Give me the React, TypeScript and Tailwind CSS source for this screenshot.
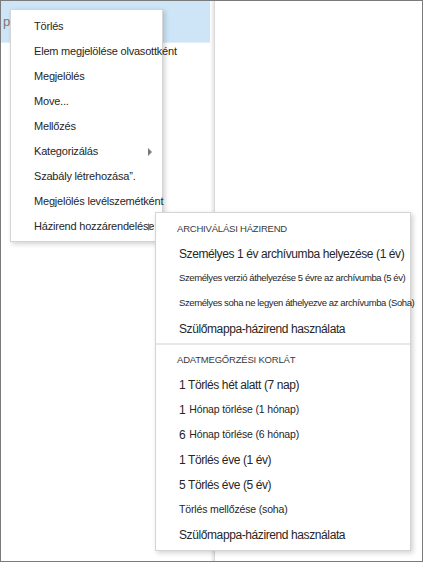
import React from "react";

type Item = { parts: { t: string; cls: string }[] };

const MAIN = [
  "Törlés",
  "Elem megjelölése olvasottként",
  "Megjelölés",
  "Move...",
  "Mellőzés",
  "Kategorizálás",
  "Szabály létrehozása\u201d.",
  "Megjelölés levélszemétként",
  "Házirend hozzárendelése:",
];

const big = "text-[12px] tracking-[-0.4px]";
const small = "text-[9.5px] tracking-[-0.4px]";
const mid = "text-[10.5px] tracking-[-0.15px]";

const ARCHIVE: Item[] = [
  { parts: [{ t: "Személyes 1 év archívumba helyezése (1 év)", cls: big }] },
  { parts: [{ t: "Személyes verzió áthelyezése 5 évre az archívumba (5 év)", cls: small }] },
  { parts: [{ t: "Személyes soha ne legyen áthelyezve az archívumba (Soha)", cls: small }] },
  { parts: [{ t: "Szülőmappa-házirend használata", cls: big }] },
];

const RETENTION: Item[] = [
  { parts: [{ t: "1 Törlés hét alatt (7 nap)", cls: big }] },
  { parts: [{ t: "1", cls: big + " mr-[4px]" }, { t: "Hónap törlése (1 hónap)", cls: mid }] },
  { parts: [{ t: "6", cls: big + " mr-[4px]" }, { t: "Hónap törlése (6 hónap)", cls: mid }] },
  { parts: [{ t: "1 Törlés éve (1 év)", cls: big }] },
  { parts: [{ t: "5 Törlés éve (5 év)", cls: big }] },
  { parts: [{ t: "Törlés mellőzése (soha)", cls: mid }] },
  { parts: [{ t: "Szülőmappa-házirend használata", cls: big }] },
];

function Arrow() {
  return (
    <span className="absolute right-[10px] top-1/2 -translate-y-1/2 w-0 h-0 border-y-[4px] border-y-transparent border-l-[4px] border-l-[#7a7a7a]" />
  );
}

function SubRow({ item }: { item: Item }) {
  return (
    <div className="h-[25px] flex items-center pl-[23px] whitespace-nowrap text-[#262626]">
      {item.parts.map((p, i) => (
        <span key={i} className={p.cls}>
          {p.t}
        </span>
      ))}
    </div>
  );
}

function Header({ label }: { label: string }) {
  return (
    <div className="h-[24px] flex items-center pl-[21px] text-[9.5px] tracking-[-0.2px] uppercase text-[#3a3a3a] whitespace-nowrap">
      {label}
    </div>
  );
}

export default function App() {
  return (
    <div
      className="relative w-[423px] h-[562px] border border-[#7b7b7b] bg-white flex overflow-hidden"
      style={{ fontFamily: '"Liberation Sans", Arial, sans-serif' }}
    >
      {/* message list pane */}
      <div className="w-[209px] shrink-0 flex flex-col">
        <div className="h-[42px] bg-[#cde5f7] border-b border-[#e3eef8] flex items-center pl-[2px] text-[13px] text-[#777]">
          pe
        </div>
      </div>
      <div className="w-[4px] shrink-0 bg-gradient-to-r from-white to-[#e6e6e6]" />
      <div className="w-px shrink-0 bg-[#d9d9d9]" />
      {/* reading pane */}
      <div className="flex-1 bg-white" />

      {/* context menu */}
      <div className="absolute left-[9px] top-[8px] w-[153px] pt-[4px] pb-[2px] bg-white border border-[#d4d4d4] shadow-[2px_2px_5px_rgba(0,0,0,0.18)]">
        {MAIN.map((label, i) => (
          <div
            key={label}
            className="relative h-[25px] flex items-center pl-[23px] text-[11px] text-[#262626] whitespace-nowrap tracking-[-0.2px]"
          >
            {label}
            {(i === 5 || i === 8) && <Arrow />}
          </div>
        ))}
      </div>

      {/* submenu */}
      <div className="absolute left-[154px] top-[211px] w-[256px] pt-[4px] pb-[3px] bg-white border border-[#d4d4d4] shadow-[2px_2px_5px_rgba(0,0,0,0.18)]">
        <Header label="Archiválási házirend" />
        {ARCHIVE.map((it, i) => (
          <SubRow key={i} item={it} />
        ))}
        <div className="mt-[2px] mb-[3px] h-[2px] bg-[#e8e8e8]" />
        <Header label="Adatmegőrzési korlát" />
        {RETENTION.map((it, i) => (
          <SubRow key={i} item={it} />
        ))}
      </div>
    </div>
  );
}
